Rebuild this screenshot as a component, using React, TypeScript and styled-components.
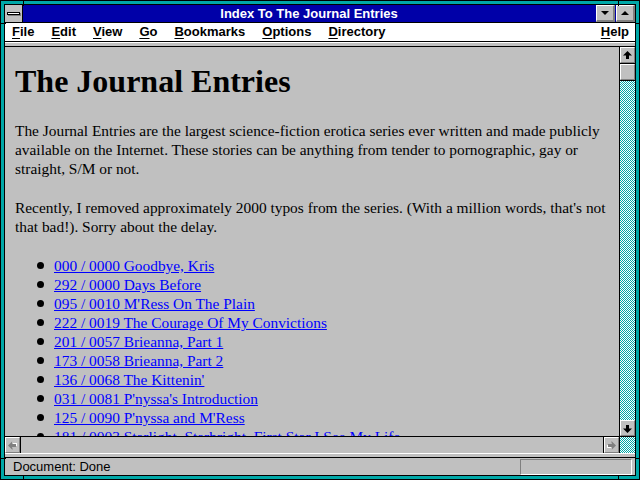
import { FC } from 'react'
import styled, { createGlobalStyle } from 'styled-components'

const TEAL = '#00a8a8'
const FACE = '#c0c0c0'
const SHADOW = '#808080'

const GlobalStyle = createGlobalStyle`
  html, body {
    margin: 0;
    padding: 0;
    background: #000;
  }
  #root {
    width: 640px;
    height: 480px;
  }
`

const links = [
  '000 / 0000 Goodbye, Kris',
  '292 / 0000 Days Before',
  "095 / 0010 M'Ress On The Plain",
  '222 / 0019 The Courage Of My Convictions',
  '201 / 0057 Brieanna, Part 1',
  '173 / 0058 Brieanna, Part 2',
  "136 / 0068 The Kittenin'",
  "031 / 0081 P'nyssa's Introduction",
  "125 / 0090 P'nyssa and M'Ress",
  '181 / 0003 Starlight, Starbright, First Star I See My Life',
]

const menus = [
  ['F', 'ile'],
  ['E', 'dit'],
  ['V', 'iew'],
  ['G', 'o'],
  ['B', 'ookmarks'],
  ['O', 'ptions'],
  ['D', 'irectory'],
]

const Arrow: FC<{ dir: 'up' | 'down' | 'left' | 'right'; disabled?: boolean }> = ({
  dir,
  disabled,
}) => {
  const rot = { up: 0, right: 90, down: 180, left: 270 }[dir]
  const fill = disabled ? SHADOW : '#000'
  return (
    <svg width="9" height="9" viewBox="0 0 9 9" style={{ transform: `rotate(${rot}deg)` }}>
      {disabled && <path d="M5 1 L9 5 L7 5 L7 9 L4 9 L4 5 L2 5 Z" fill="#fff" />}
      <path d="M4.5 0 L9 4.5 L6 4.5 L6 8 L3 8 L3 4.5 L0 4.5 Z" fill={fill} />
    </svg>
  )
}

const App: FC = () => {
  return (
    <>
      <GlobalStyle />
      <Frame>
        <Corner style={{ left: 22, top: 0 }} $v />
        <Corner style={{ left: 617, top: 0 }} $v />
        <Corner style={{ left: 22, top: 475 }} $v />
        <Corner style={{ left: 617, top: 475 }} $v />
        <Corner style={{ left: 0, top: 22 }} />
        <Corner style={{ left: 635, top: 22 }} />
        <Corner style={{ left: 0, top: 457 }} />
        <Corner style={{ left: 635, top: 457 }} />
        <Inner>
          <TitleBar>
            <SysBox>
              <SysBar />
            </SysBox>
            <Caption>Index To The Journal Entries</Caption>
            <CapButton>
              <Tri $up={false} />
            </CapButton>
            <CapButton>
              <Tri $up />
            </CapButton>
          </TitleBar>
          <MenuBar>
            {menus.map(([k, rest]) => (
              <MenuItem key={k}>
                <u>{k}</u>
                {rest}
              </MenuItem>
            ))}
            <MenuSpacer />
            <MenuItem>
              <u>H</u>elp
            </MenuItem>
          </MenuBar>
          <Splitter />
          <Main>
            <Content>
              <Heading>The Journal Entries</Heading>
              <Para>
                The Journal Entries are the largest science-fiction erotica series ever written
                and made publicly available on the Internet. These stories can be anything from
                tender to pornographic, gay or straight, S/M or not.
              </Para>
              <Para>
                Recently, I removed approximately 2000 typos from the series. (With a million
                words, that's not that bad!). Sorry about the delay.
              </Para>
              <List>
                {links.map((l) => (
                  <Item key={l}>
                    <Link href="#">{l}</Link>
                  </Item>
                ))}
              </List>
            </Content>
            <VScroll>
              <ScrollButton>
                <Arrow dir="up" />
              </ScrollButton>
              <Thumb />
              <Track />
              <ScrollButton>
                <Arrow dir="down" />
              </ScrollButton>
            </VScroll>
          </Main>
          <HScroll>
            <ScrollButton>
              <Arrow dir="left" disabled />
            </ScrollButton>
            <HTrack />
            <ScrollButton>
              <Arrow dir="right" disabled />
            </ScrollButton>
            <Dither />
          </HScroll>
          <Splitter />
          <StatusBar>
            <StatusText>Document: Done</StatusText>
            <StatusField />
          </StatusBar>
        </Inner>
      </Frame>
    </>
  )
}

const Frame = styled('div')`
  position: relative;
  box-sizing: border-box;
  width: 640px;
  height: 480px;
  border: 1px solid #000;
  padding: 3px;
  background: ${TEAL};
`

const Corner = styled('div')<{ $v?: boolean }>`
  position: absolute;
  width: ${(p) => (p.$v ? '1px' : '5px')};
  height: ${(p) => (p.$v ? '5px' : '1px')};
  background: #000;
`

const Inner = styled('div')`
  box-sizing: border-box;
  height: 100%;
  border: 1px solid #000;
  background: ${FACE};
  display: flex;
  flex-direction: column;
  overflow: hidden;
`

const TitleBar = styled('div')`
  display: flex;
  height: 17px;
  border-bottom: 1px solid #000;
  background: #0000a8;
  flex-shrink: 0;
`

const SysBox = styled('div')`
  width: 17px;
  border-right: 1px solid #000;
  background: ${FACE};
  display: flex;
  align-items: center;
  justify-content: center;
`

const SysBar = styled('div')`
  width: 11px;
  height: 1px;
  border: 1px solid #000;
  background: #fff;
  box-shadow: 1px 1px 0 ${SHADOW};
`

const Caption = styled('div')`
  flex: 1;
  text-align: center;
  color: #fff;
  font: bold 13px/17px 'Liberation Sans', Arial, sans-serif;
`

const CapButton = styled('div')`
  box-sizing: border-box;
  width: 19px;
  height: 17px;
  margin-left: 1px;
  background: ${FACE};
  border-top: 1px solid #fff;
  border-left: 1px solid #fff;
  border-right: 2px solid ${SHADOW};
  border-bottom: 2px solid ${SHADOW};
  display: flex;
  align-items: center;
  justify-content: center;
`

const Tri = styled('div')<{ $up: boolean }>`
  width: 0;
  height: 0;
  border-left: 4px solid transparent;
  border-right: 4px solid transparent;
  ${(p) => (p.$up ? 'border-bottom: 4px solid #000;' : 'border-top: 4px solid #000;')}
`

const MenuBar = styled('div')`
  display: flex;
  height: 18px;
  padding: 0 0 0 1px;
  background: #fff;
  border-bottom: 1px solid #000;
  flex-shrink: 0;
  font: bold 13px/18px 'Liberation Sans', Arial, sans-serif;
  color: #000;
`

const MenuItem = styled('div')`
  padding: 0 6px;
  margin-right: 5px;
  &:last-child {
    margin-right: 0;
  }
  u {
    text-underline-offset: 2px;
  }
`

const MenuSpacer = styled('div')`
  flex: 1;
`

const Splitter = styled('div')`
  height: 3px;
  flex-shrink: 0;
  background: ${FACE};
  border-top: 1px solid #fff;
  border-bottom: 1px solid #000;
`

const Main = styled('div')`
  flex: 1;
  display: flex;
  min-height: 0;
`

const Content = styled('div')`
  flex: 1;
  overflow: hidden;
  padding: 0 12px 0 10px;
  font: 15.4px/19px 'Liberation Serif', 'Times New Roman', serif;
  color: #000;
`

const Heading = styled('h1')`
  margin: 16px 0 21px;
  font: bold 32px/37px 'Liberation Serif', 'Times New Roman', serif;
`

const Para = styled('p')`
  margin: 0 0 20px;
`

const List = styled('ul')`
  margin: 0;
  padding: 0 0 0 39px;
  list-style: none;
`

const Item = styled('li')`
  position: relative;
  &::before {
    content: '';
    position: absolute;
    left: -17px;
    top: 6px;
    width: 7px;
    height: 7px;
    border-radius: 50%;
    background: #000;
  }
`

const Link = styled('a')`
  color: #0000ff;
  text-decoration: underline;
  white-space: nowrap;
`

const VScroll = styled('div')`
  width: 15px;
  border-left: 1px solid #000;
  display: flex;
  flex-direction: column;
`

const ScrollButton = styled('div')`
  box-sizing: border-box;
  width: 15px;
  height: 16px;
  flex-shrink: 0;
  background: ${FACE};
  border-top: 1px solid #fff;
  border-left: 1px solid #fff;
  border-right: 1px solid ${SHADOW};
  border-bottom: 1px solid ${SHADOW};
  box-shadow: 0 1px 0 #000;
  display: flex;
  align-items: center;
  justify-content: center;
`

const Thumb = styled(ScrollButton)`
  margin-top: 1px;
`

const dither = `
  background-color: #fff;
  background-image: repeating-conic-gradient(${TEAL} 0 25%, #fff 0 50%);
  background-size: 2px 2px;
`

const Track = styled('div')`
  flex: 1;
  margin-top: 1px;
  ${dither}
`

const HScroll = styled('div')`
  display: flex;
  height: 16px;
  flex-shrink: 0;
  border-top: 1px solid #000;
`

const HTrack = styled('div')`
  flex: 1;
  background: ${FACE};
  border-left: 1px solid #000;
  border-right: 1px solid #000;
`

const Dither = styled('div')`
  width: 15px;
  border-left: 1px solid #000;
  ${dither}
`

const StatusBar = styled('div')`
  height: 17px;
  flex-shrink: 0;
  display: flex;
  align-items: center;
  padding: 0 3px 0 8px;
`

const StatusText = styled('div')`
  flex: 1;
  font: 13px 'Liberation Sans', Arial, sans-serif;
  color: #000;
`

const StatusField = styled('div')`
  box-sizing: border-box;
  width: 112px;
  height: 16px;
  border-top: 1px solid ${SHADOW};
  border-left: 1px solid ${SHADOW};
  border-right: 1px solid #fff;
  border-bottom: 1px solid #fff;
`

export default App
